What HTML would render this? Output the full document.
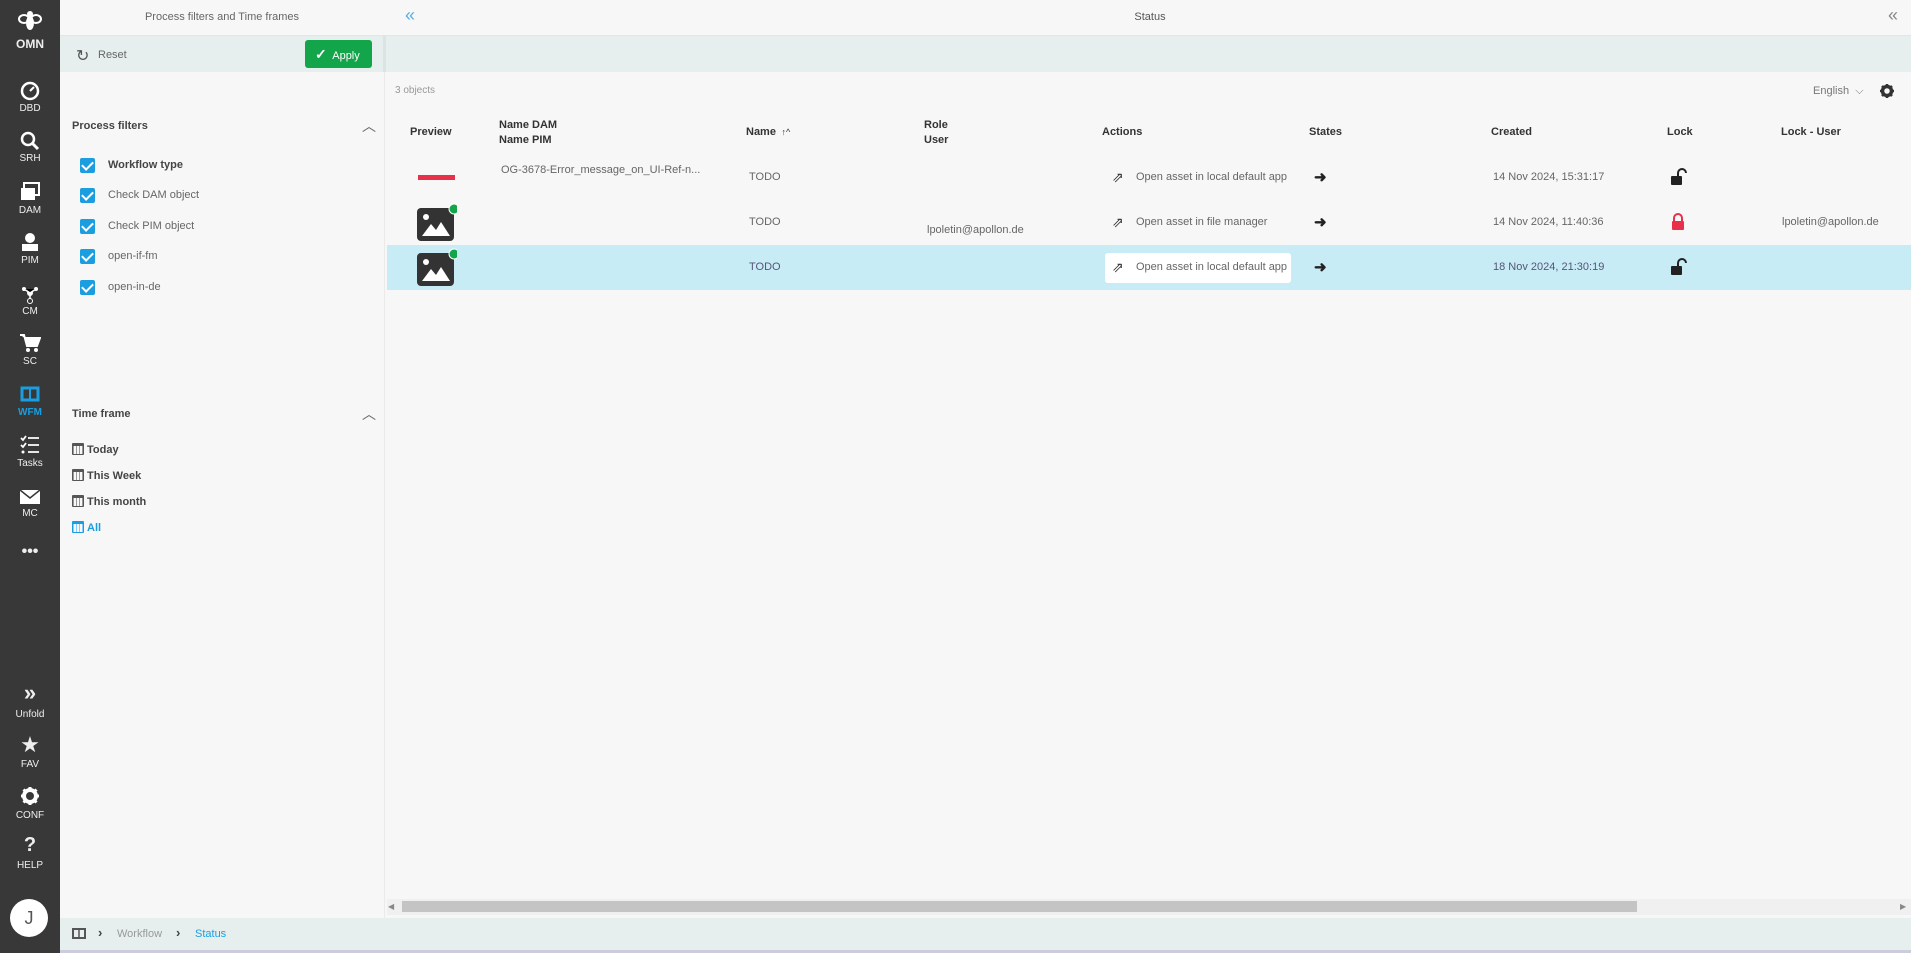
<!DOCTYPE html>
<html><head><meta charset="utf-8"><style>
*{margin:0;padding:0;box-sizing:border-box}
body{width:1911px;height:953px;overflow:hidden;background:#f7f7f7;font-family:"Liberation Sans",Arial,sans-serif;color:#444;position:relative}
.a{position:absolute;white-space:nowrap}
#sb{position:absolute;left:0;top:0;width:60px;height:953px;background:#383838}
.si{position:absolute;left:0;width:60px;text-align:center;color:#fff;font-size:10px}
.si svg{display:block;margin:0 auto}
.lbl{position:absolute;left:0;width:60px;text-align:center;color:#eee;font-size:10px}
.cb{position:absolute;left:80px;width:15px;height:15px;background:#1a9ee0;border-radius:2px}
.cb:after{content:"";position:absolute;left:4px;top:1px;width:5px;height:9px;border:solid #fff;border-width:0 2px 2px 0;transform:rotate(45deg)}
.ct{position:absolute;left:108px;font-size:11px;color:#666}
.th{position:absolute;font-size:11px;font-weight:bold;color:#333}
.td{position:absolute;font-size:11px;color:#666;white-space:nowrap}
.cal{display:inline-block;width:12px;height:12px;border:1px solid #555;border-top:3px solid #555;border-radius:1px;background:repeating-linear-gradient(90deg,#999 0 1px,transparent 1px 3px);vertical-align:-2px;margin-right:3px}
</style></head><body>
<div id="sb">
 <svg class="a" style="left:18px;top:10px" width="24" height="22" viewBox="0 0 24 22"><ellipse cx="6" cy="9" rx="5" ry="4" fill="none" stroke="#fff" stroke-width="2"/><ellipse cx="18" cy="9" rx="5" ry="4" fill="none" stroke="#fff" stroke-width="2"/><ellipse cx="12" cy="13" rx="4" ry="7" fill="#fff"/><circle cx="12" cy="4" r="3" fill="#fff"/></svg>
 <div class="lbl" style="top:37px;font-size:12px;font-weight:bold">OMN</div>
 <svg class="a" style="left:20px;top:81px" width="20" height="20"><circle cx="10" cy="10" r="8" fill="none" stroke="#fff" stroke-width="2.5"/><path d="M10 10 L14 6" stroke="#fff" stroke-width="2"/></svg><div class="lbl" style="top:103px">DBD</div>
 <svg class="a" style="left:20px;top:131px" width="20" height="20"><circle cx="8" cy="8" r="6" fill="none" stroke="#fff" stroke-width="2.5"/><path d="M12 12 L18 18" stroke="#fff" stroke-width="3"/></svg><div class="lbl" style="top:153px">SRH</div>
 <svg class="a" style="left:20px;top:182px" width="20" height="20"><rect x="4" y="1" width="15" height="12" fill="none" stroke="#fff" stroke-width="2"/><rect x="1" y="6" width="14" height="12" fill="#fff"/></svg><div class="lbl" style="top:205px">DAM</div>
 <svg class="a" style="left:21px;top:232px" width="18" height="20"><circle cx="9" cy="6" r="5" fill="#fff"/><path d="M1 12h16v7H1z" fill="#fff"/></svg><div class="lbl" style="top:255px">PIM</div>
 <svg class="a" style="left:21px;top:284px" width="18" height="20"><circle cx="9" cy="9" r="3" fill="#fff"/><circle cx="3" cy="5" r="2" fill="#fff"/><circle cx="15" cy="5" r="2" fill="#fff"/><circle cx="9" cy="17" r="2.5" fill="none" stroke="#fff"/><path d="M3 5L9 9L15 5M9 9V15" stroke="#fff" stroke-width="1.5"/></svg><div class="lbl" style="top:306px">CM</div>
 <svg class="a" style="left:19px;top:333px" width="22" height="20"><path d="M1 2h4l3 11h10l3-8H6" fill="#fff" stroke="#fff" stroke-width="2"/><circle cx="9" cy="17" r="2" fill="#fff"/><circle cx="17" cy="17" r="2" fill="#fff"/></svg><div class="lbl" style="top:356px">SC</div>
 <svg class="a" style="left:19px;top:385px" width="22" height="18"><path d="M3 3h16v12H3z" fill="none" stroke="#1a9ee0" stroke-width="3"/><path d="M11 3v12" stroke="#1a9ee0" stroke-width="2"/></svg><div class="lbl" style="top:407px;color:#1a9ee0;font-weight:bold">WFM</div>
 <svg class="a" style="left:20px;top:435px" width="20" height="20"><path d="M1 3l2 2 3-4M1 10l2 2 3-4M8 3h11M8 10h11M8 17h11" stroke="#fff" stroke-width="1.8" fill="none"/><circle cx="3" cy="17" r="1.5" fill="#fff"/></svg><div class="lbl" style="top:458px">Tasks</div>
 <svg class="a" style="left:19px;top:489px" width="22" height="16"><rect x="1" y="1" width="20" height="14" fill="#fff"/><path d="M1 1l10 8 10-8" stroke="#383838" stroke-width="1.5" fill="none"/></svg><div class="lbl" style="top:508px">MC</div>
 <div class="lbl" style="top:543px;font-size:16px;font-weight:bold">•••</div>
 <div class="lbl" style="top:683px;font-size:22px;font-weight:bold;line-height:20px">»</div><div class="lbl" style="top:709px">Unfold</div>
 <div class="lbl" style="top:733px;font-size:22px;line-height:24px">★</div><div class="lbl" style="top:759px">FAV</div>
 <svg class="a" style="left:20px;top:786px" width="20" height="20"><circle cx="10" cy="10" r="6" fill="none" stroke="#fff" stroke-width="4"/><path d="M10 1v4M10 15v4M1 10h4M15 10h4M3.5 3.5l3 3M13.5 13.5l3 3M16.5 3.5l-3 3M3.5 16.5l3-3" stroke="#fff" stroke-width="3"/></svg><div class="lbl" style="top:810px">CONF</div>
 <div class="lbl" style="top:834px;font-size:20px;font-weight:bold">?</div><div class="lbl" style="top:860px">HELP</div>
 <div class="a" style="left:10px;top:899px;width:38px;height:38px;border-radius:50%;background:#fff;color:#555;font-size:18px;text-align:center;line-height:38px">J</div>
</div>

<!-- headers -->
<div class="a" style="left:60px;top:0;width:1851px;height:36px;border-bottom:1px solid #e2e6e6"></div>
<div class="a" style="left:60px;width:324px;top:11px;text-align:center;font-size:11px;color:#666">Process filters and Time frames</div>
<div class="a" style="left:405px;top:5px;font-size:18px;color:#5aaee0">«</div>
<div class="a" style="left:1100px;top:11px;width:100px;text-align:center;font-size:11px;color:#555">Status</div>
<div class="a" style="left:1888px;top:5px;font-size:18px;color:#888">«</div>
<div class="a" style="left:60px;top:36px;width:1851px;height:36px;background:#e6efee"></div>
<div class="a" style="left:383px;top:36px;width:3px;height:36px;background:#dde3e3"></div>
<div class="a" style="left:76px;top:46px;font-size:16px;color:#555">↻</div>
<div class="a" style="left:98px;top:49px;font-size:11px;color:#666">Reset</div>
<div class="a" style="left:305px;top:40px;width:67px;height:28px;background:#12a54a;border-radius:3px;color:#fff;font-size:11px;line-height:28px;padding-left:10px"><span style="font-size:14px;font-weight:bold">✓</span>&nbsp; Apply</div>

<!-- left panel -->
<div class="a" style="left:384px;top:72px;width:1px;height:846px;background:#eaeaea"></div>
<div class="a" style="left:72px;top:120px;font-size:11px;font-weight:bold;color:#444">Process filters</div>
<div class="a" style="left:362px;top:116px;font-size:14px;color:#666">︿</div>
<div class="cb" style="top:158px"></div><div class="ct" style="top:159px;font-weight:bold;color:#444">Workflow type</div>
<div class="cb" style="top:188px"></div><div class="ct" style="top:189px">Check DAM object</div>
<div class="cb" style="top:219px"></div><div class="ct" style="top:220px">Check PIM object</div>
<div class="cb" style="top:249px"></div><div class="ct" style="top:250px">open-if-fm</div>
<div class="cb" style="top:280px"></div><div class="ct" style="top:281px">open-in-de</div>
<div class="a" style="left:72px;top:408px;font-size:11px;font-weight:bold;color:#444">Time frame</div>
<div class="a" style="left:362px;top:404px;font-size:14px;color:#666">︿</div>
<div class="a" style="left:72px;top:443px;font-size:11px;font-weight:bold;color:#444"><span class="cal"></span>Today</div>
<div class="a" style="left:72px;top:469px;font-size:11px;font-weight:bold;color:#444"><span class="cal"></span>This Week</div>
<div class="a" style="left:72px;top:495px;font-size:11px;font-weight:bold;color:#444"><span class="cal"></span>This month</div>
<div class="a" style="left:72px;top:521px;font-size:11px;font-weight:bold;color:#1a9ee0"><span class="cal" style="border-color:#1a9ee0;background:repeating-linear-gradient(90deg,#8cf 0 1px,transparent 1px 3px)"></span>All</div>

<!-- table -->
<div class="a" style="left:395px;top:85px;font-size:10px;color:#999">3 objects</div>
<div class="a" style="left:1813px;top:85px;font-size:11px;color:#777">English &nbsp;⌵</div>
<svg class="a" style="left:1879px;top:83px" width="16" height="16"><circle cx="8" cy="8" r="4.5" fill="none" stroke="#333" stroke-width="3.5"/><path d="M8 1v3M8 12v3M1 8h3M12 8h3M3 3l2 2M11 11l2 2M13 3l-2 2M3 13l2-2" stroke="#333" stroke-width="2.5"/></svg>
<div class="th" style="left:410px;top:126px">Preview</div>
<div class="th" style="left:499px;top:118px;line-height:15px">Name DAM<br>Name PIM</div>
<div class="th" style="left:746px;top:126px">Name <span style="font-weight:normal;font-size:9px">&nbsp;↑^</span></div>
<div class="th" style="left:924px;top:118px;line-height:15px">Role<br>User</div>
<div class="th" style="left:1102px;top:126px">Actions</div>
<div class="th" style="left:1309px;top:126px">States</div>
<div class="th" style="left:1491px;top:126px">Created</div>
<div class="th" style="left:1667px;top:126px">Lock</div>
<div class="th" style="left:1781px;top:126px">Lock - User</div>

<div class="a" style="left:387px;top:245px;width:1524px;height:45px;background:#c8ecf6"></div>
<!-- row1 -->
<div class="a" style="left:418px;top:175px;width:37px;height:5px;background:#e8304a"></div>
<div class="td" style="left:501px;top:164px">OG-3678-Error_message_on_UI-Ref-n...</div>
<!-- image icons -->
<svg class="a" style="left:417px;top:203px" width="40" height="38"><rect x="0" y="5" width="37" height="33" rx="4" fill="#333"/><circle cx="9" cy="14" r="3" fill="#fff"/><path d="M5 33l9-12 5 6 5-8 9 14z" fill="#fff"/><circle cx="37" cy="6" r="5" fill="#12a54a" stroke="#fff"/></svg>
<svg class="a" style="left:417px;top:248px" width="40" height="38"><rect x="0" y="5" width="37" height="33" rx="4" fill="#333"/><circle cx="9" cy="14" r="3" fill="#fff"/><path d="M5 33l9-12 5 6 5-8 9 14z" fill="#fff"/><circle cx="37" cy="6" r="5" fill="#12a54a" stroke="#fff"/></svg>
<div class="td" style="left:749px;top:171px">TODO</div>
<div class="td" style="left:749px;top:216px">TODO</div>
<div class="td" style="left:749px;top:261px;color:#557">TODO</div>
<div class="td" style="left:927px;top:224px">lpoletin@apollon.de</div>
<div class="a" style="left:1105px;top:253px;width:186px;height:30px;background:#fff;border-radius:3px"></div>
<div class="td" style="left:1112px;top:169px;font-size:14px;color:#333">⇗</div><div class="td" style="left:1136px;top:171px">Open asset in local default app</div>
<div class="td" style="left:1112px;top:214px;font-size:14px;color:#333">⇗</div><div class="td" style="left:1136px;top:216px">Open asset in file manager</div>
<div class="td" style="left:1112px;top:259px;font-size:14px;color:#333">⇗</div><div class="td" style="left:1136px;top:261px">Open asset in local default app</div>
<div class="td" style="left:1314px;top:168px;font-size:15px;color:#222;font-weight:bold">➜</div>
<div class="td" style="left:1314px;top:213px;font-size:15px;color:#222;font-weight:bold">➜</div>
<div class="td" style="left:1314px;top:258px;font-size:15px;color:#222;font-weight:bold">➜</div>
<div class="td" style="left:1493px;top:171px">14 Nov 2024, 15:31:17</div>
<div class="td" style="left:1493px;top:216px">14 Nov 2024, 11:40:36</div>
<div class="td" style="left:1493px;top:261px;color:#557">18 Nov 2024, 21:30:19</div>
<svg class="a" style="left:1670px;top:168px" width="18" height="18"><path d="M8 8V5a4 4 0 0 1 8 0" fill="none" stroke="#222" stroke-width="2"/><rect x="1" y="8" width="11" height="9" rx="1" fill="#222"/></svg>
<svg class="a" style="left:1670px;top:213px" width="16" height="18"><path d="M4 8V5a4 4 0 0 1 8 0v3" fill="none" stroke="#e8304a" stroke-width="2"/><rect x="2" y="8" width="12" height="9" rx="1" fill="#e8304a"/></svg>
<svg class="a" style="left:1670px;top:258px" width="18" height="18"><path d="M8 8V5a4 4 0 0 1 8 0" fill="none" stroke="#222" stroke-width="2"/><rect x="1" y="8" width="11" height="9" rx="1" fill="#222"/></svg>
<div class="td" style="left:1782px;top:216px">lpoletin@apollon.de</div>

<!-- scrollbar -->
<div class="a" style="left:387px;top:899px;width:1524px;height:16px;background:#f0f0f0"></div>
<div class="a" style="left:388px;top:902px;font-size:8px;color:#888">◀</div>
<div class="a" style="left:402px;top:901px;width:1235px;height:11px;background:#c4c4c4"></div>
<div class="a" style="left:1900px;top:902px;font-size:8px;color:#888">▶</div>

<!-- breadcrumb -->
<div class="a" style="left:60px;top:918px;width:1851px;height:32px;background:#e6efee"></div>
<div class="a" style="left:60px;top:950px;width:1851px;height:3px;background:#ccd"></div>
<svg class="a" style="left:71px;top:927px" width="16" height="13"><path d="M2 2h12v9H2z" fill="none" stroke="#555" stroke-width="2"/><path d="M8 2v9" stroke="#555" stroke-width="1.5"/></svg>
<div class="a" style="left:98px;top:925px;font-size:13px;font-weight:bold;color:#444">›</div>
<div class="a" style="left:117px;top:928px;font-size:11px;color:#999">Workflow</div>
<div class="a" style="left:176px;top:925px;font-size:13px;font-weight:bold;color:#444">›</div>
<div class="a" style="left:195px;top:928px;font-size:11px;color:#1a9ee0">Status</div>
</body></html>
